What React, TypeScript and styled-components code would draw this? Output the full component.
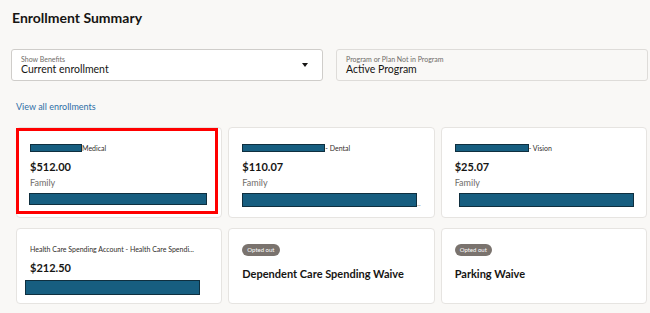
import React from "react";
import styled, { createGlobalStyle } from "styled-components";

const GlobalStyle = createGlobalStyle`
  body {
    margin: 0;
    background: #f9f8f6;
    font-family: Lato, "Noto Sans", sans-serif;
    color: #161513;
  }
`;

type Plan = {
  redactW?: number;
  suffix?: string;
  title?: string;
  price?: string;
  coverage?: string;
  barW?: number;
  barX?: number;
  barH?: number;
  dots?: boolean;
  optedOut?: string;
  highlight?: boolean;
};

const plans: Plan[] = [
  { redactW: 52, suffix: "Medical", price: "$512.00", coverage: "Family", barW: 178, barX: -1, barH: 12, highlight: true },
  { redactW: 83, suffix: "- Dental", price: "$110.07", coverage: "Family", barW: 175, barX: 0, barH: 14, dots: true },
  { redactW: 74, suffix: "- Vision", price: "$25.07", coverage: "Family", barW: 175, barX: 4, barH: 14 },
  { title: "Health Care Spending Account - Health Care Spendi...", price: "$212.50", barW: 175, barX: -5, barH: 15 },
  { optedOut: "Dependent Care Spending Waive" },
  { optedOut: "Parking Waive" },
];

const App: React.FC = () => {
  return (
    <Page>
      <GlobalStyle />
      <Title>Enrollment Summary</Title>
      <Filters>
        <Select>
          <FieldLabel>Show Benefits</FieldLabel>
          <FieldValue>Current enrollment</FieldValue>
          <Caret />
        </Select>
        <ReadOnly>
          <FieldLabel>Program or Plan Not in Program</FieldLabel>
          <FieldValue>Active Program</FieldValue>
        </ReadOnly>
      </Filters>
      <ViewLink href="#">View all enrollments</ViewLink>
      <Grid>
        {plans.map((p, i) => (
          <Card key={i} $tall={i < 3}>
            {p.highlight && <Highlight />}
            {p.optedOut ? (
              <>
                <Badge>Opted out</Badge>
                <WaiveName>{p.optedOut}</WaiveName>
              </>
            ) : (
              <>
                <PlanLine>
                  {p.redactW && <Redact style={{ width: p.redactW }} />}
                  {p.suffix && <span>{p.suffix}</span>}
                  {p.title && <span>{p.title}</span>}
                </PlanLine>
                <Price>{p.price}</Price>
                {p.coverage && <Coverage>{p.coverage}</Coverage>}
                <BarRow $x={p.barX ?? 0} $mt={p.coverage ? 4 : 5}>
                  <Redact style={{ width: p.barW, height: p.barH }} />
                  {p.dots && <Dots>..</Dots>}
                </BarRow>
              </>
            )}
          </Card>
        ))}
      </Grid>
    </Page>
  );
};

const Page = styled.div`
  width: 650px;
  height: 313px;
  padding: 10px 3px 0 11px;
  box-sizing: border-box;
  overflow: hidden;
`;

const Title = styled.h1`
  margin: 0 0 0 1px;
  font-size: 14px;
  line-height: 16px;
  font-weight: 700;
`;

const Filters = styled.div`
  display: grid;
  grid-template-columns: 312px 312px;
  column-gap: 13px;
  margin-top: 23px;
`;

const Select = styled.div`
  position: relative;
  height: 32px;
  box-sizing: border-box;
  padding: 5px 9px 0;
  background: #ffffff;
  border: 1px solid #cfcdca;
  border-radius: 3px;
`;

const ReadOnly = styled(Select)`
  background: #f9f8f6;
  border-color: #dedcd9;
`;

const FieldLabel = styled.div`
  font-size: 7px;
  line-height: 8px;
  color: #6f6c69;
`;

const FieldValue = styled.div`
  font-size: 10.5px;
  line-height: 13px;
  color: #161513;
`;

const Caret = styled.span`
  position: absolute;
  right: 14px;
  top: 13px;
  width: 0;
  height: 0;
  border-left: 3.5px solid transparent;
  border-right: 3.5px solid transparent;
  border-top: 4px solid #161513;
`;

const ViewLink = styled.a`
  display: block;
  margin: 20px 0 0 5px;
  font-size: 9px;
  line-height: 12px;
  color: #2f6fa6;
  text-decoration: none;
`;

const Grid = styled.div`
  display: grid;
  grid-template-columns: repeat(3, 1fr);
  column-gap: 6px;
  row-gap: 10px;
  margin: 14px 0 0 5px;
`;

const Card = styled.div<{ $tall: boolean }>`
  position: relative;
  height: ${(p) => (p.$tall ? 91 : 76)}px;
  box-sizing: border-box;
  padding: ${(p) => (p.$tall ? 15 : 15)}px 12px 0 13px;
  background: #ffffff;
  border: 1px solid #e6e4e1;
  border-radius: 4px;
`;

const Highlight = styled.div`
  position: absolute;
  left: -1px;
  top: 0;
  width: 202px;
  height: 86px;
  box-sizing: border-box;
  border: 3px solid #ff0000;
`;

const PlanLine = styled.div`
  display: flex;
  align-items: center;
  height: 10px;
  font-size: 7px;
  color: #312d2a;
  white-space: nowrap;
`;

const Redact = styled.div`
  height: 8px;
  background: #175e80;
  border: 1px solid #0f2f3f;
  box-sizing: border-box;
  flex-shrink: 0;
`;

const Price = styled.div`
  margin-top: 7px;
  font-size: 11px;
  line-height: 14px;
  font-weight: 700;
`;

const Coverage = styled.div`
  margin-top: 3px;
  font-size: 9px;
  line-height: 12px;
  color: #6f6c69;
`;

const BarRow = styled.div<{ $x: number; $mt: number }>`
  display: flex;
  align-items: flex-end;
  margin-top: ${(p) => p.$mt}px;
  margin-left: ${(p) => p.$x}px;
`;

const Dots = styled.span`
  font-size: 7px;
  line-height: 7px;
  color: #8a8683;
`;

const Badge = styled.div`
  width: fit-content;
  padding: 0 5px;
  height: 12px;
  line-height: 12px;
  font-size: 6px;
  color: #ffffff;
  background: #7a736e;
  border-radius: 6px;
`;

const WaiveName = styled.div`
  margin-top: 11px;
  font-size: 11px;
  line-height: 14px;
  font-weight: 700;
`;

export default App;
